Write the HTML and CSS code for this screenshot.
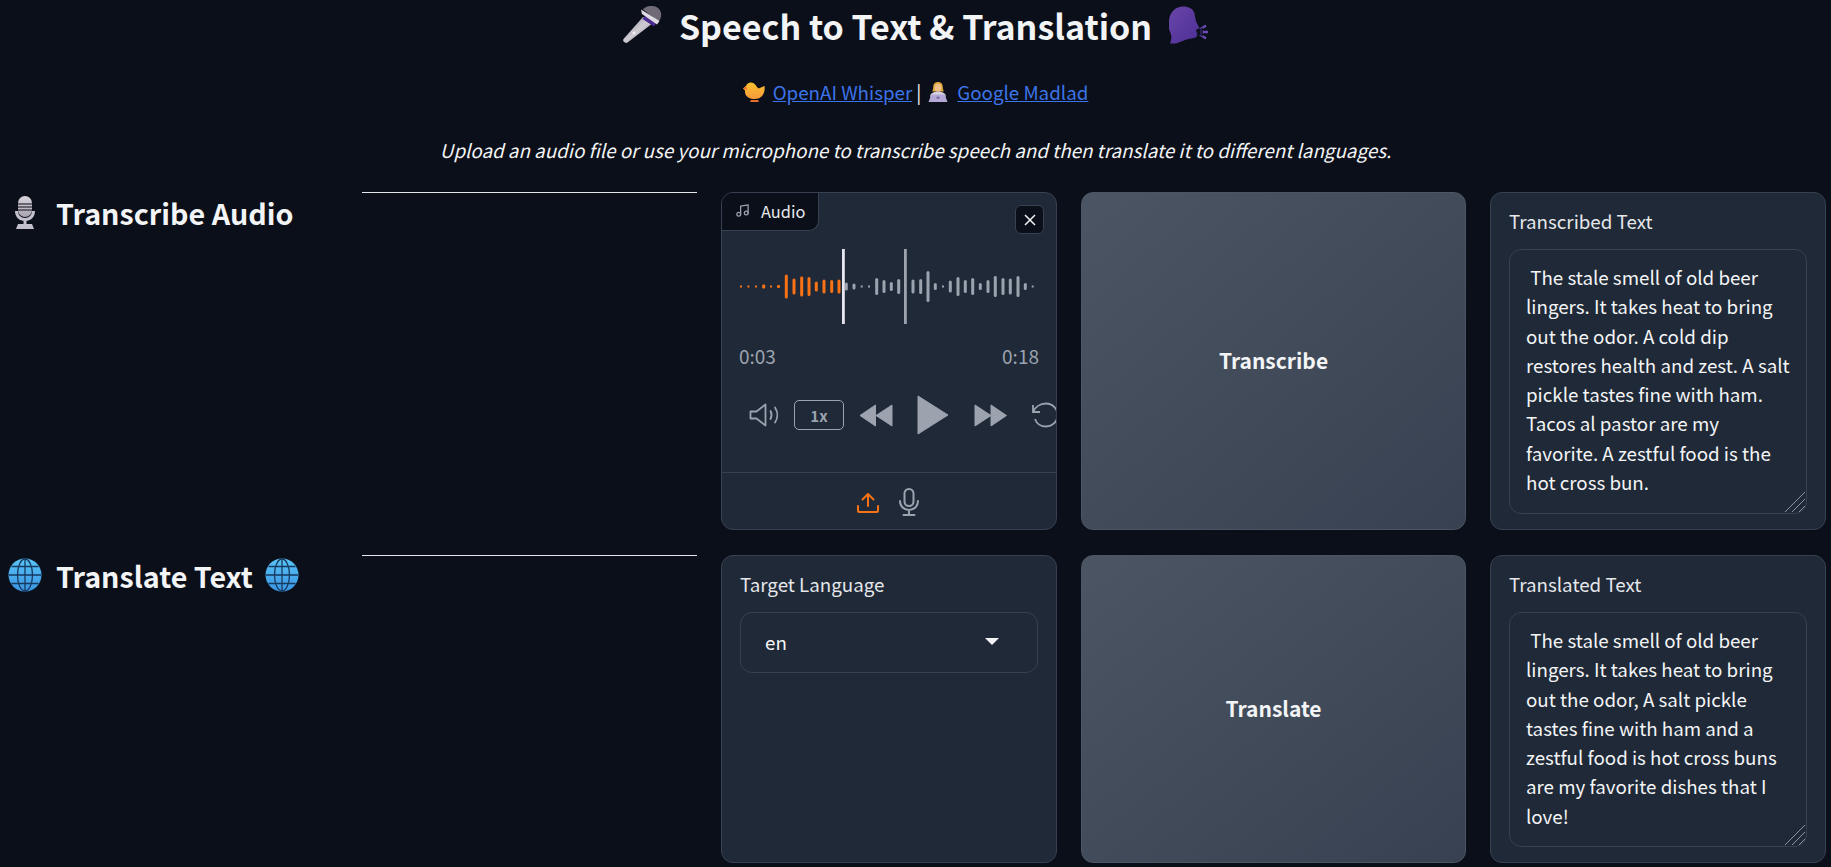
FILE: index.html
```html
<!DOCTYPE html>
<html lang="en">
<head>
    <meta charset="UTF-8">
    <meta name="viewport" content="width=device-width, initial-scale=1.0">
    <title>Speech to Text &amp; Translation</title>
    <link rel="stylesheet" href="styles.css">
</head>
<body>
    <svg class="defs" width="0" height="0" aria-hidden="true">
        <defs>
            <linearGradient id="metal" x1="0" y1="0" x2="0" y2="1">
                <stop offset="0" stop-color="#d8d4dc"/>
                <stop offset="1" stop-color="#a8a3ae"/>
            </linearGradient>
            <linearGradient id="handle" x1="0" y1="0" x2="1" y2="1">
                <stop offset="0" stop-color="#8f8a95"/>
                <stop offset=".5" stop-color="#cfcbd3"/>
                <stop offset="1" stop-color="#85808c"/>
            </linearGradient>
            <linearGradient id="violet" x1="0" y1="0" x2="1" y2="1">
                <stop offset="0" stop-color="#6a45a8"/>
                <stop offset="1" stop-color="#4c2f96"/>
            </linearGradient>
            <linearGradient id="sky" x1="0" y1="0" x2="0" y2="1">
                <stop offset="0" stop-color="#58c4f6"/>
                <stop offset="1" stop-color="#3a94e4"/>
            </linearGradient>
            <linearGradient id="chick" x1="0" y1="0" x2="0" y2="1">
                <stop offset="0" stop-color="#fcc02f"/>
                <stop offset="1" stop-color="#f79a3a"/>
            </linearGradient>
            <symbol id="globe" viewBox="0 0 34 34">
                <circle cx="17" cy="17" r="16.500" fill="url(#sky)"/>
                <g fill="none" stroke="#17395e" stroke-width="1.300">
                    <ellipse cx="17" cy="17" rx="7.500" ry="16"/>
                    <path d="M17 1v32M1 17h32M3.500 8.500h27M3.500 25.500h27"/>
                </g>
            </symbol>
        </defs>
    </svg>

    <header class="intro">
        <h1 class="title">
            <svg class="emoji-title" viewBox="0 0 40 38">
                <path d="M21 11 1.500 33c-1.500 2 2 5 4 3.500L31 17z" fill="url(#handle)"/>
                <circle cx="12" cy="27" r="1.500" fill="#f2f0f4"/>
                <path d="M20.500 13 32 20.500l2-3-10.500-8z" fill="#4a2a90"/>
                <path d="M21 3.500C24-1 33-1.500 37 3c3.500 4 2.500 9.500-.5 12.500z" fill="#6f6a76"/>
                <path d="M19 3.500 37.500 15l-2.500 3.500L20 8z" fill="#dedbe2"/>
            </svg>
            <span>Speech to Text &amp; Translation</span>
            <svg class="emoji-title" viewBox="0 0 40 37">
                <path d="M1 37c1-3 2-6 1-9-2-4-3-9-2-14C1 5 7 0 14 0c6 0 10 2 11.500 7l1.500 8 3.500 6.500-3 1.500-.5 1.500 1.500 3-1 3c-3 1.500-7 1.500-10 2.500L7 37z" fill="url(#violet)"/>
                <path d="M31 23l6-4M31 25.500h8M31 28l6 4" stroke="#6a4bb4" stroke-width="2.400"/>
                <path d="M28 25.500h6M31 23.500l3-2M31 27.500l3 2" stroke="#14122e" stroke-width="1.400"/>
            </svg>
        </h1>
        <p class="links">
            <svg class="emoji-small" viewBox="0 0 22 20">
                <path d="M0 6.500 3 4c1-3 5-4.500 8-2.500 2 1.500 3 4 4.500 5l6-2.500c1 6-2 13-9.500 13S1.500 13 2 8.500z" fill="url(#chick)"/>
                <path d="M0 6.500 3 4l1 4z" fill="#e9702a"/>
                <path d="M8 18h7l1 2H7z" fill="#e9702a"/>
            </svg>
            <a href="#">OpenAI Whisper</a><span class="pipe">|</span>
            <svg class="emoji-small" viewBox="0 0 22 21">
                <path d="M6 5c0-3 2-5 5-5s5 2 5 5c0 3 1 4 1 5H5c0-1 1-2 1-5z" fill="#e0ac3e"/>
                <ellipse cx="11" cy="6" rx="3.500" ry="4" fill="#f0bf8a"/>
                <path d="M3 14c0-2 4-4 8-4s8 2 8 4v2H3z" fill="#d8d1e0"/>
                <path d="M4 13h14l3 8H1z" fill="#b3a8d6"/>
                <rect x="9.500" y="15.500" width="3" height="2" fill="#6f659c"/>
            </svg>
            <a href="#">Google Madlad</a>
        </p>
        <p class="lead">Upload an audio file or use your microphone to transcribe speech and then translate it to different languages.</p>
    </header>

    <main class="rows">
        <section class="row row-audio">
            <h2 class="row-title">
                <svg class="emoji-mic" viewBox="0 0 20 33">
                    <path d="M0 15h3c0 4 3 7 7 7s7-3 7-7h3c0 6-4 10-10 10S0 21 0 15z" fill="#c4c0cb"/>
                    <rect x="3" y="0" width="14" height="21" rx="7" fill="url(#metal)"/>
                    <path d="M3 8h14M3 11h14M3 14h14" stroke="#4c4652" stroke-width="1.500"/>
                    <path d="M8.500 24h3v4h-3zM3 28h14l2 5H1z" fill="#c4c0cb"/>
                </svg>
                <span>Transcribe Audio</span>
            </h2>
            <hr class="rule">
            <div class="panel audio">
                <div class="tab">
                    <svg class="tab-icon" viewBox="0 0 24 24" fill="none" stroke="currentColor" stroke-width="2" stroke-linecap="round" stroke-linejoin="round">
                        <path d="M9 18V5l12-2v13"/>
                        <circle cx="6" cy="18" r="3"/>
                        <circle cx="18" cy="16" r="3"/>
                    </svg>
                    Audio
                </div>
                <button class="close" type="button" aria-label="Clear">
                    <svg viewBox="0 0 14 14" width="14" height="14" fill="none" stroke="currentColor" stroke-width="1.500">
                        <path d="M2 2l10 10M12 2 2 12"/>
                    </svg>
                </button>
                <svg class="wave" viewBox="0 0 301 75" width="301" height="75">
                    <g fill="#f97316">
                        <rect x="1" y="36.500" width="2" height="2"/>
                        <rect x="8.400" y="36.500" width="2" height="2"/>
                        <rect x="16" y="36.500" width="2" height="2"/>
                        <rect x="23.200" y="35.500" width="3" height="4" rx="1"/>
                        <rect x="31" y="36.500" width="2" height="2"/>
                        <rect x="38" y="36" width="3" height="3" rx="1"/>
                        <rect x="45.800" y="25.500" width="3" height="24" rx="1.500"/>
                        <rect x="53.500" y="29.500" width="3" height="16" rx="1.500"/>
                        <rect x="61.200" y="27.500" width="3" height="20" rx="1.500"/>
                        <rect x="68.500" y="28" width="3" height="19" rx="1.500"/>
                        <rect x="75.800" y="32.500" width="3" height="10" rx="1.500"/>
                        <rect x="83.500" y="30.500" width="3" height="14" rx="1.500"/>
                        <rect x="91.200" y="31" width="3" height="13" rx="1.500"/>
                        <rect x="98.500" y="30.500" width="3" height="14" rx="1.500"/>
                    </g>
                    <g fill="#9ca3af">
                        <rect x="105.800" y="33.500" width="3" height="8" rx="1.500"/>
                        <rect x="113.500" y="34.500" width="3" height="6" rx="1.500"/>
                        <rect x="121.700" y="36.500" width="2" height="2"/>
                        <rect x="129" y="36.500" width="2" height="2"/>
                        <rect x="136.200" y="29" width="3" height="17" rx="1.500"/>
                        <rect x="143.500" y="31" width="3" height="13" rx="1.500"/>
                        <rect x="150.800" y="33" width="3" height="9" rx="1.500"/>
                        <rect x="158.200" y="30" width="3" height="15" rx="1.500"/>
                        <rect x="172.500" y="30.500" width="3" height="14" rx="1.500"/>
                        <rect x="180.200" y="30" width="3" height="15" rx="1.500"/>
                        <rect x="187.500" y="22" width="3" height="31" rx="1.500"/>
                        <rect x="194.800" y="34" width="3" height="7" rx="1.500"/>
                        <rect x="203" y="36.500" width="2" height="2"/>
                        <rect x="209.800" y="31.500" width="3" height="12" rx="1.500"/>
                        <rect x="217.500" y="28" width="3" height="19" rx="1.500"/>
                        <rect x="224.800" y="31" width="3" height="13" rx="1.500"/>
                        <rect x="232.200" y="29" width="3" height="17" rx="1.500"/>
                        <rect x="239.800" y="34" width="3" height="7" rx="1.500"/>
                        <rect x="247.500" y="31" width="3" height="13" rx="1.500"/>
                        <rect x="254.800" y="27" width="3" height="21" rx="1.500"/>
                        <rect x="262.500" y="29" width="3" height="17" rx="1.500"/>
                        <rect x="269.800" y="29.500" width="3" height="16" rx="1.500"/>
                        <rect x="277.500" y="27" width="3" height="21" rx="1.500"/>
                        <rect x="284.800" y="34" width="3" height="7" rx="1.500"/>
                        <rect x="292.700" y="36.500" width="2" height="2"/>
                        <rect x="165" y="0" width="2.800" height="75"/>
                    </g>
                    <rect x="103" y="0" width="2.800" height="75" fill="#e7e5f0"/>
                </svg>
                <div class="times">
                    <span>0:03</span>
                    <span>0:18</span>
                </div>
                <div class="controls">
                    <svg class="ctl-volume" viewBox="0 0 30 24" fill="none" stroke="#9ca3af" stroke-width="1.800" stroke-linejoin="round" stroke-linecap="round">
                        <path d="M1 8.500v7h6l9 7V1.500l-9 7z"/>
                        <path d="M21 8c1.300 2.500 1.300 5.500 0 8M25.500 4.500c3 4.500 3 10.500 0 15"/>
                    </svg>
                    <span class="speed">1x</span>
                    <svg class="ctl-skip" viewBox="0 0 33 23" fill="#9ca3af">
                        <path d="M0 11.500 15.500 1v21zM16 11.500 32 1v21z" stroke="#9ca3af" stroke-linejoin="round"/>
                    </svg>
                    <svg class="ctl-play" viewBox="0 0 32 40" fill="#9ca3af">
                        <path d="M1 1v38l30-19z" stroke="#9ca3af" stroke-linejoin="round"/>
                    </svg>
                    <svg class="ctl-skip" viewBox="0 0 33 23" fill="#9ca3af">
                        <path d="M1 1v21l16-10.500zM17 1v21l15.500-10.500z" stroke="#9ca3af" stroke-linejoin="round"/>
                    </svg>
                    <svg class="ctl-replay" viewBox="0 0 26 26" fill="none" stroke="#9ca3af" stroke-width="1.800">
                        <path d="M1 3v7h7"/>
                        <path d="M1 10C3 5 8 1.500 14 1.500c6.500 0 11.500 5 11.500 11.500S20.500 24.500 14 24.500c-5 0-9.500-3-11-7.500"/>
                    </svg>
                </div>
                <div class="sources">
                    <svg class="src-upload" viewBox="0 0 22 21" fill="none" stroke="#f97316" stroke-width="2" stroke-linecap="round" stroke-linejoin="round">
                        <path d="M11 14V2M5.500 7.500 11 2l5.500 5.500"/>
                        <path d="M1 14v4.500c0 1 .5 1.500 1.500 1.500h17c1 0 1.500-.5 1.500-1.500V14"/>
                    </svg>
                    <svg class="src-mic" viewBox="0 0 20 28" fill="none" stroke="#9ca3af" stroke-width="2" stroke-linecap="round">
                        <rect x="5.500" y="1" width="9" height="17" rx="4.500"/>
                        <path d="M1 13c0 5.500 4 9 9 9s9-3.500 9-9M10 22v5M4.500 27h11"/>
                    </svg>
                </div>
            </div>
            <button class="action" type="button">Transcribe</button>
            <label class="panel field">
                <span class="label">Transcribed Text</span>
                <span class="output-wrap">
                    <textarea class="output" readonly> The stale smell of old beer lingers. It takes heat to bring out the odor. A cold dip restores health and zest. A salt pickle tastes fine with ham. Tacos al pastor are my favorite. A zestful food is the hot cross bun.</textarea>
                    <span class="grip"></span>
                </span>
            </label>
        </section>

        <section class="row row-translate">
            <h2 class="row-title">
                <svg class="emoji-head"><use href="#globe"/></svg>
                <span>Translate Text</span>
                <svg class="emoji-head emoji-after"><use href="#globe"/></svg>
            </h2>
            <hr class="rule">
            <div class="panel field">
                <span class="label">Target Language</span>
                <div class="select">
                    <span>en</span>
                    <span class="caret"></span>
                </div>
            </div>
            <button class="action" type="button">Translate</button>
            <label class="panel field">
                <span class="label">Translated Text</span>
                <span class="output-wrap">
                    <textarea class="output" readonly> The stale smell of old beer lingers. It takes heat to bring out the odor, A salt pickle tastes fine with ham and a zestful food is hot cross buns are my favorite dishes that I love!</textarea>
                    <span class="grip"></span>
                </span>
            </label>
        </section>
    </main>
</body>
</html>
```

FILE: styles.css
```css
* {
    box-sizing: border-box;
}

html, body {
    height: 867px;
    overflow: hidden;
}

body {
    margin: 0;
    padding: 0 5px;
    background-color: #0b0f19;
    color: #f3f4f6;
    font-family: "Noto Sans CJK SC", "Noto Sans", sans-serif;
}

.defs {
    position: absolute;
}

.intro {
    text-align: center;
    height: 192px;
    padding-top: 1px;
}

.title {
    margin: 0;
    display: flex;
    justify-content: center;
    align-items: center;
    gap: 17px;
    height: 48px;
    font-size: 34px;
    font-weight: 600;
}

.emoji-title {
    width: 40px;
    height: 38px;
}

.links {
    margin: 28px 0 0;
    height: 30px;
    font-size: 18.75px;
    line-height: 30px;
    display: flex;
    justify-content: center;
    align-items: center;
    gap: 8px;
}

.links a {
    color: #3b74e8;
}

.pipe {
    margin-left: -4px;
    margin-right: -2px;
}

.emoji-small {
    width: 22px;
    height: 20px;
}

.lead {
    margin: 28px 0 0;
    font-size: 18.8px;
    line-height: 30px;
    font-style: italic;
}

.rows {
    display: flex;
    flex-direction: column;
    gap: 25px;
}

.row {
    display: grid;
    grid-template-columns: 333px 335px 336px 385px 336px;
    gap: 24px;
    align-items: stretch;
}

.row-audio {
    height: 338px;
}

.row-translate {
    height: 308px;
}

.row-title {
    margin: 0;
    display: flex;
    align-items: center;
    gap: 14px;
    align-self: start;
    height: 40px;
    padding-left: 3px;
    font-size: 28.7px;
    font-weight: 600;
}

.emoji-head {
    width: 34px;
    height: 34px;
    flex: none;
}

.emoji-after {
    margin-left: -2px;
}

.emoji-mic {
    width: 20px;
    height: 33px;
    margin: 0 7px 0 7px;
    flex: none;
}

.rule {
    margin: 0;
    height: 1px;
    align-self: start;
    border: none;
    background: #e5e7eb;
}

.panel {
    background: #1f2937;
    border: 1px solid #374151;
    border-radius: 12px;
    overflow: hidden;
}

.audio {
    position: relative;
    display: flex;
    flex-direction: column;
}

.tab {
    display: flex;
    align-items: center;
    gap: 11px;
    align-self: flex-start;
    width: 97px;
    height: 38px;
    padding: 0 0 2px 13px;
    background: #0b0f19;
    border-right: 1px solid #374151;
    border-bottom: 1px solid #374151;
    border-bottom-right-radius: 10px;
    font-size: 16.4px;
    color: #e5e7eb;
}

.tab-icon {
    width: 15px;
    height: 15px;
    color: #9ca3af;
}

.close {
    position: absolute;
    top: 12px;
    right: 12px;
    width: 29px;
    height: 29px;
    padding: 0;
    display: flex;
    align-items: center;
    justify-content: center;
    background: #0b0f19;
    border: 1px solid #374151;
    border-radius: 6px;
    color: #f3f4f6;
}

.wave {
    display: block;
    flex: none;
    margin: 18px 0 0 17px;
}

.times {
    display: flex;
    justify-content: space-between;
    padding: 0 17px;
    margin-top: 18px;
    height: 28px;
    font-size: 19px;
    line-height: 28px;
    color: #9ca3af;
}

.controls {
    display: flex;
    align-items: center;
    margin-top: 25px;
    height: 40px;
    padding-left: 27px;
    flex: none;
}

.ctl-volume {
    width: 31px;
    height: 24px;
    flex: none;
}

.speed {
    width: 50px;
    height: 30px;
    margin-left: 14px;
    flex: none;
    border: 1px solid #9ca3af;
    border-radius: 5px;
    text-align: center;
    font-size: 15px;
    font-weight: 600;
    line-height: 30px;
    color: #9ca3af;
}

.ctl-skip {
    width: 33px;
    height: 23px;
    margin-left: 16px;
    flex: none;
}

.ctl-play {
    width: 32px;
    height: 40px;
    margin-left: 24px;
    flex: none;
}

.ctl-play + .ctl-skip {
    margin-left: 25px;
}

.ctl-replay {
    width: 26px;
    height: 26px;
    margin-left: 25px;
    flex: none;
}

.sources {
    display: flex;
    justify-content: center;
    align-items: center;
    gap: 20px;
    margin-top: auto;
    height: 57px;
    padding: 2px 2px 0 0;
    border-top: 1px solid #374151;
}

.src-upload {
    width: 22px;
    height: 21px;
}

.src-mic {
    width: 20px;
    height: 28px;
}

.action {
    padding: 0 0 2px;
    border: 1px solid #4b5563;
    border-radius: 12px;
    background: linear-gradient(to bottom right, #4b5563, #374151);
    color: #f3f4f6;
    font-family: inherit;
    font-size: 21px;
    font-weight: 600;
}

.field {
    display: flex;
    flex-direction: column;
    padding: 13px 18px 15px 18px;
}

.label {
    height: 29px;
    margin-bottom: 14px;
    font-size: 18.75px;
    line-height: 29px;
    color: #e5e7eb;
}

.output-wrap {
    position: relative;
    display: flex;
    flex: 1;
}

.output {
    flex: 1;
    width: 100%;
    padding: 12px 16px;
    background: #1f2937;
    border: 1px solid #374151;
    border-radius: 12px;
    color: #f3f4f6;
    font-family: inherit;
    font-size: 18.75px;
    line-height: 29.3px;
    outline: none;
    overflow: hidden;
    resize: none;
}

.grip {
    position: absolute;
    right: 2px;
    bottom: 2px;
    width: 21px;
    height: 21px;
    background: repeating-linear-gradient(135deg, #8d939d 0 1px, transparent 1px 5px);
    clip-path: polygon(100% 0, 100% 100%, 0 100%);
}

.select {
    display: flex;
    align-items: center;
    justify-content: space-between;
    height: 61px;
    padding: 0 38px 2px 24px;
    border: 1px solid #374151;
    border-radius: 12px;
    font-size: 18.75px;
}

.caret {
    width: 0;
    height: 0;
    border-left: 7px solid transparent;
    border-right: 7px solid transparent;
    border-top: 7px solid #f3f4f6;
}
```
